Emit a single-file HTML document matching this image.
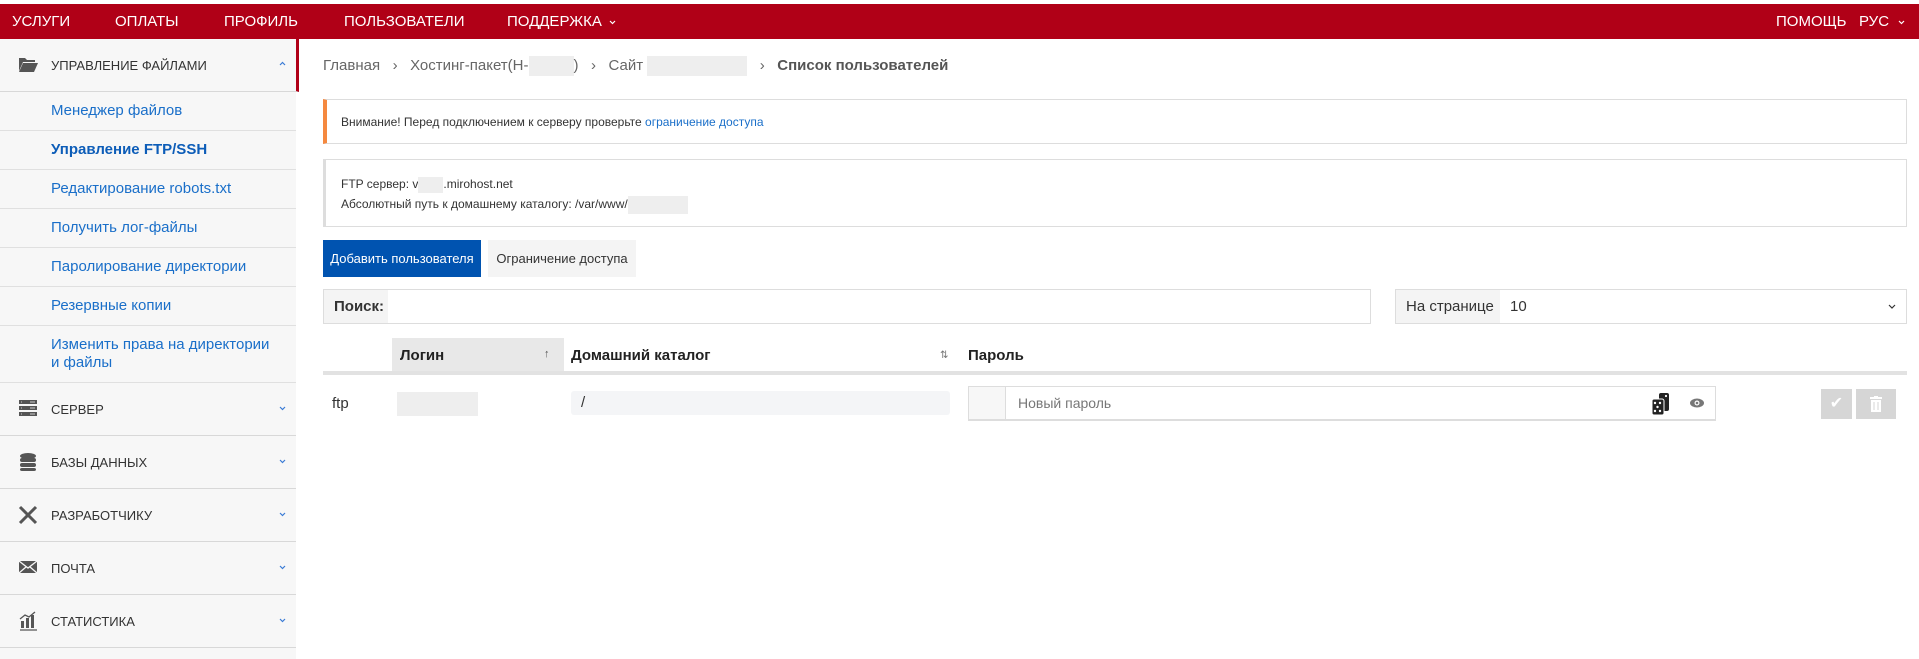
<!DOCTYPE html>
<html><head><meta charset="utf-8"><style>
*{box-sizing:border-box;margin:0;padding:0}
body{width:1919px;height:659px;overflow:hidden;background:#fff;font-family:"Liberation Sans",sans-serif;color:#333;position:relative}
.top{position:absolute;left:0;top:4px;width:1919px;height:35px;background:#b00017;color:#fff;font-size:15px}
.top span{position:absolute;top:9px}
.side{position:absolute;left:0;top:39px;width:296px;height:620px;background:#f7f7f7}
.hd{position:absolute;left:0;width:296px;height:53px;border-bottom:1px solid #d8d8d8;font-size:13px;color:#333}
.hd .t{position:absolute;left:51px;top:19px}
.hd .ic{position:absolute;left:18px;top:16px}
.hd .ch{position:absolute;left:279px;top:23px}
.it{position:absolute;left:0;width:296px;border-bottom:1px solid #e0e0e0;font-size:15px;color:#1a6fc9;padding-left:51px}
.main{position:absolute;left:323px;width:1584px}
.box{position:absolute;left:323px;width:1584px;border:1px solid #ddd;font-size:12px;color:#333}
.blur{display:inline-block;background:#eeeeee;vertical-align:middle}
</style></head><body>
<div class="top">
<span style="left:12px">УСЛУГИ</span><span style="left:115px">ОПЛАТЫ</span><span style="left:224px">ПРОФИЛЬ</span><span style="left:344px">ПОЛЬЗОВАТЕЛИ</span><span style="left:507px">ПОДДЕРЖКА</span><svg style="position:absolute;left:609px;top:16px" width="7" height="5"><path d="M1 1l2.5 2.5L6 1" stroke="#fff" stroke-width="1.2" fill="none"/></svg>
<span style="left:1776px">ПОМОЩЬ</span><span style="left:1859px">РУС</span><svg style="position:absolute;left:1898px;top:16px" width="7" height="5"><path d="M1 1l2.5 2.5L6 1" stroke="#fff" stroke-width="1.2" fill="none"/></svg>
</div>
<div class="side">
<div class="hd" style="top:0;border-right:3px solid #b00017;width:299px"><svg class="ic" width="20" height="18" viewBox="0 0 20 18"><path d="M1 3h6l2 2h8v2H5L1 16z" fill="#555"/><path d="M5 8h15l-4 9H1z" fill="#555"/></svg><span class="t">УПРАВЛЕНИЕ ФАЙЛАМИ</span><svg class="ch" style="top:22px" width="7" height="5"><path d="M1 4l2.5-2.5L6 4" stroke="#3a7bd5" stroke-width="1.2" fill="none"/></svg></div>
<div class="it" style="top:53px;height:39px;padding-top:10px">Менеджер файлов</div>
<div class="it" style="top:92px;height:39px;padding-top:10px;font-weight:bold;color:#0d5db8">Управление FTP/SSH</div>
<div class="it" style="top:131px;height:39px;padding-top:10px">Редактирование robots.txt</div>
<div class="it" style="top:170px;height:39px;padding-top:10px">Получить лог-файлы</div>
<div class="it" style="top:209px;height:39px;padding-top:10px">Паролирование директории</div>
<div class="it" style="top:248px;height:39px;padding-top:10px">Резервные копии</div>
<div class="it" style="top:287px;height:57px;padding-top:10px;line-height:18px">Изменить права на директории<br>и файлы</div>
<div class="hd" style="top:344px"><svg class="ic" width="20" height="18"><rect x="1" y="1" width="18" height="4" fill="#555"/><rect x="1" y="7" width="18" height="4" fill="#555"/><rect x="1" y="13" width="18" height="4" fill="#555"/><path d="M3 3h1M3 9h1M3 15h1M12 3h5M12 9h5M12 15h5" stroke="#ccc"/></svg><span class="t">СЕРВЕР</span><svg class="ch" width="7" height="5"><path d="M1 1l2.5 2.5L6 1" stroke="#3a7bd5" stroke-width="1.2" fill="none"/></svg></div>
<div class="hd" style="top:397px"><svg class="ic" width="20" height="20"><ellipse cx="10" cy="4" rx="8" ry="3" fill="#555"/><rect x="2" y="6" width="16" height="4" rx="2" fill="#555"/><rect x="2" y="11" width="16" height="4" rx="2" fill="#555"/><rect x="2" y="16" width="16" height="3" rx="2" fill="#555"/></svg><span class="t">БАЗЫ ДАННЫХ</span><svg class="ch" width="7" height="5"><path d="M1 1l2.5 2.5L6 1" stroke="#3a7bd5" stroke-width="1.2" fill="none"/></svg></div>
<div class="hd" style="top:450px"><svg class="ic" width="20" height="20"><path d="M2 2l16 16M18 2L2 18" stroke="#555" stroke-width="3"/></svg><span class="t">РАЗРАБОТЧИКУ</span><svg class="ch" width="7" height="5"><path d="M1 1l2.5 2.5L6 1" stroke="#3a7bd5" stroke-width="1.2" fill="none"/></svg></div>
<div class="hd" style="top:503px"><svg class="ic" width="20" height="18"><rect x="1" y="3" width="18" height="12" fill="#555"/><path d="M1 3l9 7 9-7M1 15l7-6M19 15l-7-6" stroke="#f7f7f7" stroke-width="1.3" fill="none"/></svg><span class="t">ПОЧТА</span><svg class="ch" width="7" height="5"><path d="M1 1l2.5 2.5L6 1" stroke="#3a7bd5" stroke-width="1.2" fill="none"/></svg></div>
<div class="hd" style="top:556px"><svg class="ic" width="20" height="20"><rect x="3" y="10" width="3" height="7" fill="#555"/><rect x="8" y="7" width="3" height="10" fill="#555"/><rect x="13" y="4" width="3" height="13" fill="#555"/><path d="M2 19h17M2 8l5-4 4 2 6-5" stroke="#555" stroke-width="1.3" fill="none"/></svg><span class="t">СТАТИСТИКА</span><svg class="ch" width="7" height="5"><path d="M1 1l2.5 2.5L6 1" stroke="#3a7bd5" stroke-width="1.2" fill="none"/></svg></div>
</div>

<div class="main" style="top:56px;font-size:15px;color:#666">Главная &nbsp;&nbsp;›&nbsp;&nbsp; Хостинг-пакет(H-<span class="blur" style="width:45px;height:20px"></span>) &nbsp;&nbsp;›&nbsp;&nbsp; Сайт <span class="blur" style="width:100px;height:20px"></span> &nbsp;&nbsp;›&nbsp;&nbsp; <b style="color:#555">Список пользователей</b></div>

<div class="box" style="top:99px;height:45px;border-left:4px solid #f5893f;padding:15px 0 0 14px">Внимание! Перед подключением к серверу проверьте <span style="color:#1a6fc9">ограничение доступа</span></div>
<div class="box" style="top:159px;height:68px;border-left:3px solid #ddd;padding:14px 0 0 15px;line-height:20px">FTP сервер: v<span class="blur" style="width:25px;height:16px"></span>.mirohost.net<br>Абсолютный путь к домашнему каталогу: /var/www/<span class="blur" style="width:60px;height:18px"></span></div>

<div style="position:absolute;left:323px;top:240px;width:158px;height:37px;background:#0053b0;color:#fff;font-size:13px;text-align:center;line-height:37px">Добавить пользователя</div>
<div style="position:absolute;left:488px;top:240px;width:148px;height:37px;background:#f4f4f4;color:#333;font-size:13px;text-align:center;line-height:37px">Ограничение доступа</div>

<div style="position:absolute;left:323px;top:289px;width:1048px;height:35px;border:1px solid #ddd"><div style="width:64px;height:33px;background:#f4f4f4;font-size:15px;font-weight:bold;line-height:33px;padding-left:10px">Поиск:</div></div>
<div style="position:absolute;left:1395px;top:289px;width:512px;height:35px;border:1px solid #ddd;font-size:15px"><div style="position:absolute;left:0;top:0;width:104px;height:33px;background:#f4f4f4;line-height:33px;padding-left:10px">На странице</div><span style="position:absolute;left:114px;top:8px">10</span><svg style="position:absolute;right:10px;top:14px" width="8" height="5"><path d="M1 1l3 3 3-3" stroke="#333" stroke-width="1.2" fill="none"/></svg></div>

<div style="position:absolute;left:392px;top:338px;width:172px;height:33px;background:#e8e8e8"></div>
<div style="position:absolute;left:323px;top:371px;width:1584px;height:4px;background:#e2e2e2"></div>
<div style="position:absolute;left:400px;top:347px;font-size:15px;font-weight:bold;color:#222">Логин</div>
<div style="position:absolute;left:544px;top:348px;font-size:11px;color:#555">↑</div>
<div style="position:absolute;left:571px;top:347px;font-size:15px;font-weight:bold;color:#222">Домашний каталог</div>
<div style="position:absolute;left:940px;top:350px;font-size:10px;color:#777">⇅</div>
<div style="position:absolute;left:968px;top:347px;font-size:15px;font-weight:bold;color:#222">Пароль</div>

<div style="position:absolute;left:332px;top:395px;font-size:15px">ftp</div>
<div class="blur" style="position:absolute;left:397px;top:392px;width:81px;height:24px"></div>
<div style="position:absolute;left:571px;top:391px;width:379px;height:24px;background:#f4f5f7;border-radius:3px;font-size:15px;padding:3px 10px">/</div>
<div style="position:absolute;left:968px;top:386px;width:748px;height:35px;border:1px solid #ddd;border-bottom-width:2px"><div style="position:absolute;left:0;top:0;width:37px;height:32px;background:#f7f7f7;border-right:1px solid #ddd"></div><span style="position:absolute;left:49px;top:8px;font-size:14px;color:#777">Новый пароль</span>
<svg style="position:absolute;left:680px;top:5px" width="26" height="24" viewBox="0 0 26 24"><rect x="10" y="1" width="10" height="18" rx="2" fill="#222"/><rect x="3" y="7" width="12" height="16" rx="2" fill="#222" stroke="#fff" stroke-width="1"/><circle cx="6" cy="11" r="1.2" fill="#fff"/><circle cx="11" cy="11" r="1.2" fill="#fff"/><circle cx="6" cy="19" r="1.2" fill="#fff"/><circle cx="11" cy="19" r="1.2" fill="#fff"/><circle cx="8.5" cy="15" r="1.2" fill="#fff"/><circle cx="17" cy="4" r="1.1" fill="#fff"/></svg>
<svg style="position:absolute;left:720px;top:10px" width="16" height="12"><ellipse cx="8" cy="6" rx="7" ry="4.5" fill="#777"/><circle cx="8" cy="6" r="2.5" fill="#fff"/><circle cx="8" cy="6" r="1.3" fill="#777"/></svg></div>
<div style="position:absolute;left:1821px;top:389px;width:31px;height:30px;background:#d6d6d6;color:#fff;text-align:center;line-height:30px;font-size:16px">✔</div>
<div style="position:absolute;left:1856px;top:389px;width:40px;height:30px;background:#d6d6d6"><svg style="position:absolute;left:14px;top:7px" width="12" height="16"><rect x="0" y="1" width="12" height="2" fill="#fff"/><rect x="4" y="0" width="4" height="2" fill="#fff"/><rect x="1" y="4" width="10" height="12" fill="#fff"/><path d="M4 6v8M8 6v8" stroke="#d6d6d6"/></svg></div>
</body></html>
